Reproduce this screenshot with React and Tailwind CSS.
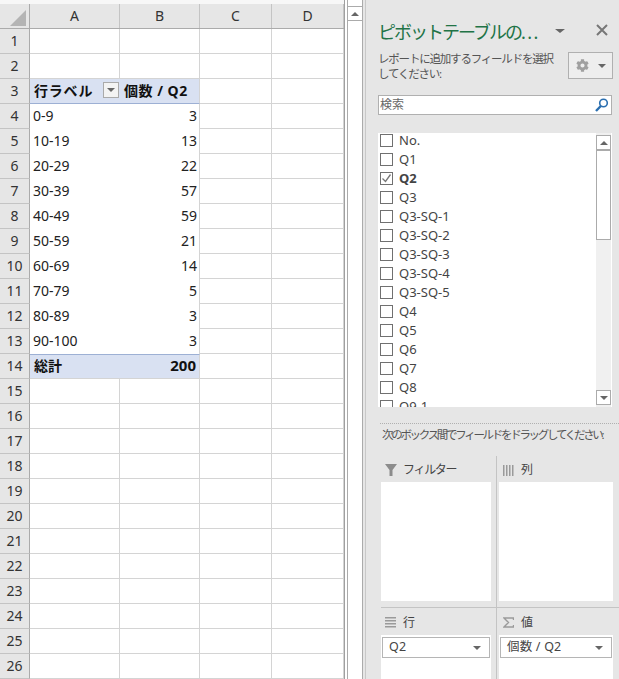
import { FaCog } from "react-icons/fa";

const FONT = "font-['Noto_Sans','Noto_Sans_CJK_JP',sans-serif]";

const COLS = [
  { name: "A", cls: "w-[90px]" },
  { name: "B", cls: "w-[80px]" },
  { name: "C", cls: "w-[72px]" },
  { name: "D", cls: "w-[72px]" },
];

const DATA = [
  ["0-9", 3],
  ["10-19", 13],
  ["20-29", 22],
  ["30-39", 57],
  ["40-49", 59],
  ["50-59", 21],
  ["60-69", 14],
  ["70-79", 5],
  ["80-89", 3],
  ["90-100", 3],
];

const FIELDS = ["No.", "Q1", "Q2", "Q3", "Q3-SQ-1", "Q3-SQ-2", "Q3-SQ-3", "Q3-SQ-4", "Q3-SQ-5", "Q4", "Q5", "Q6", "Q7", "Q8", "Q9-1"];

const Tri = ({ up, cls = "border-x-[4px]" }) => (
  <span
    className={
      "inline-block h-0 w-0 border-x-transparent " +
      cls +
      (up ? " border-b-[4px] border-b-[#666]" : " border-t-[4px] border-t-[#666]")
    }
  />
);

function Cell({ col, row }) {
  // ピボットの範囲だけ中身を入れる
  const base = "h-full shrink-0 border-r border-b border-[#d4d4d4] " + col.cls;
  if (row === 3 && col.name === "A") {
    return (
      <div className="flex h-full w-[90px] shrink-0 items-center justify-between border-b border-[#9db0d4] bg-[#d9e1f2] pb-[2px] pl-[4px] pr-[1px] text-[14px] font-bold tracking-[0.8px] text-[#111]">
        <span>行ラベル</span>
        <span className="flex h-[16px] w-[16px] items-center justify-center border border-[#aaa] bg-[#f3f3f3]">
          <Tri />
        </span>
      </div>
    );
  }
  if (row === 3 && col.name === "B") {
    return (
      <div className="flex h-full w-[80px] shrink-0 items-center whitespace-nowrap border-b border-r border-b-[#9db0d4] border-r-[#d4d4d4] bg-[#d9e1f2] pb-[2px] pl-[4px] text-[14px] font-bold tracking-[0.5px] text-[#111]">
        個数 / Q2
      </div>
    );
  }
  if (row === 14 && col.name === "A") {
    return (
      <div className="flex h-full w-[90px] shrink-0 items-center border-b border-t border-b-[#d4d4d4] border-t-[#9db0d4] bg-[#d9e1f2] pb-[2px] pl-[4px] text-[14px] font-bold text-[#111]">
        総計
      </div>
    );
  }
  if (row === 14 && col.name === "B") {
    return (
      <div className="flex h-full w-[80px] shrink-0 items-center justify-end border-b border-r border-t border-b-[#d4d4d4] border-r-[#d4d4d4] border-t-[#9db0d4] bg-[#d9e1f2] pb-[2px] pr-[3px] text-[15px] font-bold text-[#111]">
        200
      </div>
    );
  }
  if (row >= 4 && row <= 13) {
    const d = DATA[row - 4];
    if (col.name === "A") {
      return <div className="flex h-full w-[90px] shrink-0 items-center pb-[2px] pl-[3px] text-[14px] text-[#222]">{d[0]}</div>;
    }
    if (col.name === "B") {
      return <div className="flex h-full w-[80px] shrink-0 items-center justify-end border-r border-[#d4d4d4] pb-[2px] pr-[2px] text-[14px] text-[#222]">{d[1]}</div>;
    }
  }
  return <div className={base} />;
}

function Sheet() {
  const rows = Array.from({ length: 26 }, (_, i) => i + 1);
  return (
    <div className="w-[345px] shrink-0 overflow-hidden border-r border-[#a0a0a0] bg-white">
      <div className="flex h-[29px] border-b border-t-[4px] border-b-[#ababab] border-t-[#f7f7f7] bg-[#e6e6e6]">
        <div className="relative h-full w-[30px] shrink-0 border-r border-[#ababab]">
          <span className="absolute bottom-[2px] right-[3px] h-0 w-0 border-b-[16px] border-l-[16px] border-b-[#b4b4b4] border-l-transparent" />
        </div>
        {COLS.map((c) => (
          <div key={c.name} className={"flex h-full shrink-0 items-center justify-center border-r border-[#c4c4c4] pb-[1px] text-[14px] text-[#333] " + c.cls}>
            {c.name}
          </div>
        ))}
      </div>
      {rows.map((r) => (
        <div key={r} className="flex h-[25px]">
          <div className="flex h-full w-[30px] shrink-0 items-center justify-center border-r border-b border-r-[#ababab] border-b-[#c4c4c4] bg-[#e6e6e6] pb-[2px] text-[14px] text-[#333]">
            {r}
          </div>
          {COLS.map((c) => (
            <Cell key={c.name} col={c} row={r} />
          ))}
        </div>
      ))}
    </div>
  );
}

function SheetScroll() {
  return (
    <div className="flex w-[20px] shrink-0 bg-white pl-[2px]">
      <div className="flex h-full w-[16px] flex-col border-x border-[#ababab] pt-[6px]">
        <div className="-mx-px flex h-[15px] items-center justify-center border border-[#ababab] bg-white">
          <Tri up />
        </div>
      </div>
      <div className="h-full w-[2px] bg-[#e6e6e6]" />
    </div>
  );
}

function FieldList() {
  return (
    <div className="relative ml-[12px] mt-[18px] h-[274px] w-[234px] overflow-hidden bg-white pl-[2px]">
      <div className="-mt-[2px]">
        {FIELDS.map((f) => (
          <div key={f} className="flex h-[19px] items-center gap-[6px]">
            <span className="flex h-[13px] w-[13px] shrink-0 items-center justify-center border border-[#707070] bg-white">
              {f === "Q2" && (
                <svg width="11" height="11" viewBox="0 0 11 11" fill="none">
                  <path d="M1.5 5.5 L4.5 8.5 L9.5 1.5" stroke="#777" strokeWidth="1.3" />
                </svg>
              )}
            </span>
            <span className={"text-[13px] text-[#444] " + (f === "Q2" ? "font-bold" : "")}>{f}</span>
          </div>
        ))}
      </div>
      <div className="absolute bottom-0 right-[1px] top-0 flex w-[15px] flex-col bg-[#f0f0f0] pt-[2px] pb-[2px]">
        <div className="flex h-[15px] shrink-0 items-center justify-center border border-[#ababab] bg-white">
          <Tri up />
        </div>
        <div className="h-[90px] shrink-0 border border-[#ababab] bg-white" />
        <div className="flex-1" />
        <div className="flex h-[15px] shrink-0 items-center justify-center border border-[#ababab] bg-white">
          <Tri />
        </div>
      </div>
    </div>
  );
}

const FilterIcon = () => (
  <svg width="12" height="12" viewBox="0 0 12 12" fill="#8c8c8c">
    <path d="M0 0 H12 L7.5 6 V12 H4.5 V6 Z" />
  </svg>
);
const ColIcon = () => (
  <svg width="11" height="11" viewBox="0 0 11 11" fill="#9a9a9a">
    <path d="M0 0h1.5v11H0zM3 0h1.5v11H3zM6 0h1.5v11H6zM9 0h1.5v11H9z" />
  </svg>
);
const RowIcon = () => (
  <svg width="11" height="11" viewBox="0 0 11 11" fill="#9a9a9a">
    <path d="M0 0h11v1.5H0zM0 3h11v1.5H0zM0 6h11v1.5H0zM0 9h11v1.5H0z" />
  </svg>
);
const SumIcon = () => (
  <svg width="11" height="11" viewBox="0 0 11 11" fill="none" stroke="#9a9a9a" strokeWidth="1.4">
    <path d="M10.5 3 V1 H1 L5.5 5.5 L1 10 H10.5 V8" />
  </svg>
);

function Area({ icon, label, h, tag, wide, head }) {
  return (
    <div className={wide ? "w-[114px]" : "w-[110px]"}>
      <div className={"flex items-center pl-[4px] pt-[2px] text-[12px] tracking-[-1.3px] text-[#444] " + head}>
        <span className="flex w-[18px] shrink-0 items-center">{icon}</span>
        <span>{label}</span>
      </div>
      <div className={"bg-white pl-[1px] pr-[1px] pt-[2px] " + h}>
        {tag && (
          <div className="flex h-[21px] items-center justify-between border border-[#b5b5b5] bg-white pl-[6px] pr-[8px] text-[12.5px] tracking-[0.2px] text-[#444]">
            <span>{tag}</span>
            <Tri />
          </div>
        )}
      </div>
    </div>
  );
}

function Panel() {
  return (
    <div className="h-full min-w-0 flex-1 overflow-hidden border-l border-[#c8c8c8] bg-[#e6e6e6]">
      <div className="flex h-[52px] items-center pl-[12px] pt-[12px]">
        <span className="w-[177px] whitespace-nowrap text-[18px] tracking-[-2px] text-[#217346]">
          ピボットテーブルの<span className="tracking-[1.5px]">...</span>
        </span>
        <span className="mb-[10px]"><Tri cls="border-x-[5px]" /></span>
        <span className="mb-[4px] ml-[31px]">
          <svg width="12" height="12" viewBox="0 0 12 12" stroke="#777" strokeWidth="2">
            <path d="M1 1 L11 11 M11 1 L1 11" />
          </svg>
        </span>
      </div>
      <div className="flex h-[34px] pl-[12px]">
        <p className="-mt-[1px] w-[179px] text-[11.5px] leading-[15px] tracking-[-1.2px] text-[#555]">
          レポートに追加するフィールドを選択してください:
        </p>
        <div className="ml-[11px] flex h-[27px] w-[45px] items-center justify-center gap-[9px] border border-[#b0b0b0] bg-[#eeeeee]">
          <FaCog className="text-[13px] text-[#a0a0a0]" />
          <Tri />
        </div>
      </div>
      <div className="ml-[12px] mt-[9px] flex h-[20px] w-[234px] items-center justify-between border border-[#b0b0b0] bg-white pl-[1px] pr-[2px] text-[12px] text-[#666]">
        <span>検索</span>
        <svg width="14" height="14" viewBox="0 0 14 14" fill="none" stroke="#2b6fb0" strokeWidth="1.6">
          <circle cx="8.5" cy="5" r="3.8" />
          <path d="M5.8 8 L1 13" strokeWidth="2.4" />
        </svg>
      </div>
      <FieldList />
      <div className="ml-[14px] mt-[16px] border-t border-dotted border-[#b0b0b0]" />
      <p className="ml-[16px] mt-[2px] h-[18px] whitespace-nowrap text-[11.5px] leading-[18px] tracking-[-2.3px] text-[#555]">
        次のボックス間でフィールドをドラッグしてください:
      </p>
      <div className="ml-[15px] mt-[12px] flex h-[152px] border-b border-[#c4c4c4]">
        <div className="pr-[5px]">
          <Area icon={<FilterIcon />} label="フィルター" h="h-[119px]" head="h-[26px]" />
        </div>
        <div className="border-l border-[#c4c4c4] pl-[2px]">
          <Area icon={<ColIcon />} label="列" h="h-[119px]" head="h-[26px]" wide />
        </div>
      </div>
      <div className="ml-[15px] flex">
        <div className="pr-[5px]">
          <Area icon={<RowIcon />} label="行" h="h-[50px]" head="h-[27px]" tag="Q2" />
        </div>
        <div className="border-l border-[#c4c4c4] pl-[2px]">
          <Area icon={<SumIcon />} label="値" h="h-[50px]" head="h-[27px]" tag="個数 / Q2" wide />
        </div>
      </div>
    </div>
  );
}

export default function App() {
  return (
    <div className={"flex h-[679px] w-[619px] overflow-hidden bg-white " + FONT}>
      <Sheet />
      <SheetScroll />
      <Panel />
    </div>
  );
}
